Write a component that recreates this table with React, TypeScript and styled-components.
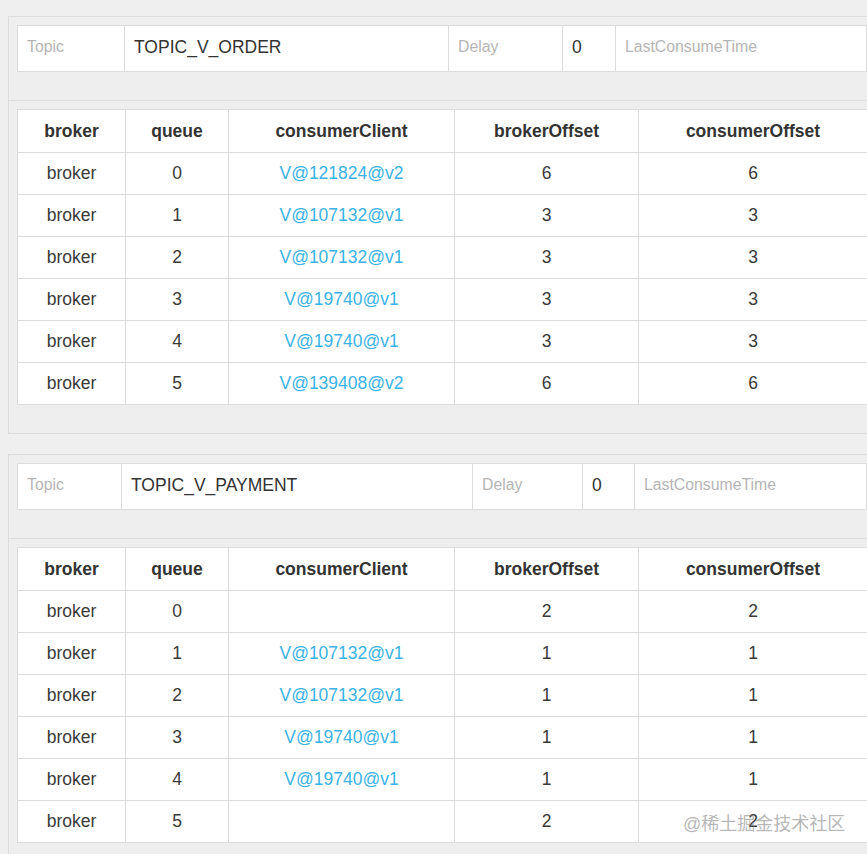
import React from "react";
import styled, { createGlobalStyle } from "styled-components";

const GlobalStyle = createGlobalStyle`
  html, body {
    margin: 0;
    padding: 0;
    background: #efefef;
    overflow: hidden;
  }
  body {
    font-family: "Liberation Sans", Arial, sans-serif;
    color: #333;
  }
`;

const Page = styled.div`
  position: relative;
  width: 867px;
  height: 854px;
  overflow: hidden;
  box-sizing: border-box;
  padding: 16px 0 0 8px;
  background: #efefef;
`;

const Panel = styled.section`
  width: 868px;
  box-sizing: border-box;
  border: 1px solid #dcdcdc;
  background: #eeeeee;
  margin-bottom: 20px;
`;

const PanelHeading = styled.div`
  padding: 8px;
  border-bottom: 1px solid #dcdcdc;
`;

const PanelBody = styled.div`
  padding: 8px;
`;

const InfoTable = styled.table`
  width: 850px;
  border-collapse: collapse;
  table-layout: fixed;
  background: #fff;
  margin-bottom: 20px;
`;

const InfoCell = styled.td<{ $label?: boolean }>`
  height: 46px;
  padding: 0 9px 3px 9px;
  border: 1px solid #dcdcdc;
  font-size: ${(p) => (p.$label ? "15.8px" : "17.5px")};
  color: ${(p) => (p.$label ? "#b5b5b5" : "#333")};
  white-space: nowrap;
  vertical-align: middle;
  box-sizing: border-box;
`;

const DataTable = styled.table`
  width: 850px;
  border-collapse: collapse;
  table-layout: fixed;
  background: #fff;
  margin-bottom: 20px;
`;

const HeadCell = styled.th`
  height: 43px;
  padding: 0;
  border: 1px solid #dcdcdc;
  font-size: 17.5px;
  font-weight: bold;
  color: #333;
  text-align: center;
  vertical-align: middle;
  box-sizing: border-box;
`;

const Cell = styled.td`
  height: 42px;
  padding: 0;
  border: 1px solid #dcdcdc;
  font-size: 17.5px;
  color: #3a3a3a;
  text-align: center;
  vertical-align: middle;
  box-sizing: border-box;
`;

const ClientLink = styled.a`
  color: #3bb2e6;
  text-decoration: none;
  cursor: pointer;
`;

const Watermark = styled.div`
  position: absolute;
  left: 683px;
  top: 809px;
  font-family: "Liberation Sans", "Noto Sans CJK SC", sans-serif;
  font-size: 18px;
  color: rgba(120, 120, 120, 0.55);
  white-space: nowrap;
  pointer-events: none;
`;

type Row = { queue: number; client: string; brokerOffset: number; consumerOffset: number };
type TopicData = {
  topic: string;
  delay: number;
  infoWidths: number[];
  rows: Row[];
};

const colWidths = [108, 103, 226, 184, 229];

const topics: TopicData[] = [
  {
    topic: "TOPIC_V_ORDER",
    delay: 0,
    infoWidths: [107, 324, 114, 53],
    rows: [
      { queue: 0, client: "V@121824@v2", brokerOffset: 6, consumerOffset: 6 },
      { queue: 1, client: "V@107132@v1", brokerOffset: 3, consumerOffset: 3 },
      { queue: 2, client: "V@107132@v1", brokerOffset: 3, consumerOffset: 3 },
      { queue: 3, client: "V@19740@v1", brokerOffset: 3, consumerOffset: 3 },
      { queue: 4, client: "V@19740@v1", brokerOffset: 3, consumerOffset: 3 },
      { queue: 5, client: "V@139408@v2", brokerOffset: 6, consumerOffset: 6 },
    ],
  },
  {
    topic: "TOPIC_V_PAYMENT",
    delay: 0,
    infoWidths: [104, 351, 110, 52],
    rows: [
      { queue: 0, client: "", brokerOffset: 2, consumerOffset: 2 },
      { queue: 1, client: "V@107132@v1", brokerOffset: 1, consumerOffset: 1 },
      { queue: 2, client: "V@107132@v1", brokerOffset: 1, consumerOffset: 1 },
      { queue: 3, client: "V@19740@v1", brokerOffset: 1, consumerOffset: 1 },
      { queue: 4, client: "V@19740@v1", brokerOffset: 1, consumerOffset: 1 },
      { queue: 5, client: "", brokerOffset: 2, consumerOffset: 2 },
    ],
  },
];

function TopicPanel({ data }: { data: TopicData }) {
  const [w0, w1, w2, w3] = data.infoWidths;
  return (
    <Panel>
      <PanelHeading>
        <InfoTable>
          <colgroup>
            <col style={{ width: w0 }} />
            <col style={{ width: w1 }} />
            <col style={{ width: w2 }} />
            <col style={{ width: w3 }} />
            <col />
          </colgroup>
          <tbody>
            <tr>
              <InfoCell $label>Topic</InfoCell>
              <InfoCell>{data.topic}</InfoCell>
              <InfoCell $label>Delay</InfoCell>
              <InfoCell>{data.delay}</InfoCell>
              <InfoCell $label>LastConsumeTime</InfoCell>
            </tr>
          </tbody>
        </InfoTable>
      </PanelHeading>
      <PanelBody>
        <DataTable>
          <colgroup>
            {colWidths.map((w, i) => (
              <col key={i} style={{ width: w }} />
            ))}
          </colgroup>
          <thead>
            <tr>
              <HeadCell>broker</HeadCell>
              <HeadCell>queue</HeadCell>
              <HeadCell>consumerClient</HeadCell>
              <HeadCell>brokerOffset</HeadCell>
              <HeadCell>consumerOffset</HeadCell>
            </tr>
          </thead>
          <tbody>
            {data.rows.map((r) => (
              <tr key={r.queue}>
                <Cell>broker</Cell>
                <Cell>{r.queue}</Cell>
                <Cell>{r.client && <ClientLink>{r.client}</ClientLink>}</Cell>
                <Cell>{r.brokerOffset}</Cell>
                <Cell>{r.consumerOffset}</Cell>
              </tr>
            ))}
          </tbody>
        </DataTable>
      </PanelBody>
    </Panel>
  );
}

export default function App() {
  return (
    <>
      <GlobalStyle />
      <Page>
        {topics.map((t) => (
          <TopicPanel key={t.topic} data={t} />
        ))}
        <Watermark>@稀土掘金技术社区</Watermark>
      </Page>
    </>
  );
}
